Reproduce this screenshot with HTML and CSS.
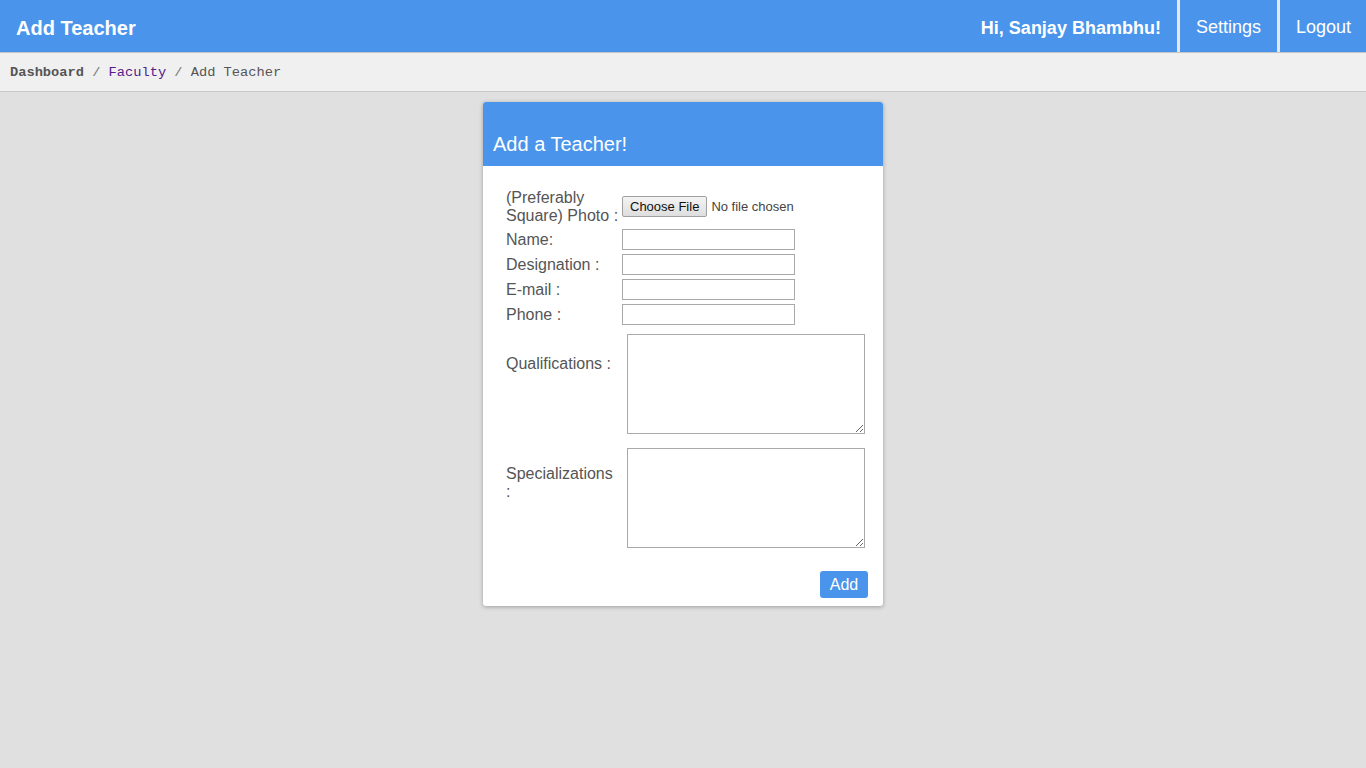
FILE: index.html
```html
<!DOCTYPE html>
<html>
<head>
<meta charset="utf-8">
<title>Add Teacher</title>
<link rel="stylesheet" href="styles.css">
</head>
<body>
<header class="topbar">
  <div class="brand">Add Teacher</div>
  <nav class="nav">
    <span class="greet">Hi, Sanjay Bhambhu!</span>
    <a class="nav-link" href="#">Settings</a>
    <a class="nav-link" href="#">Logout</a>
  </nav>
</header>
<div class="crumbs">
  <a class="crumb-home" href="#">Dashboard</a><span class="sep"> / </span><a class="crumb-link" href="#">Faculty</a><span class="sep"> / </span><span class="crumb-cur">Add Teacher</span>
</div>
<main class="main">
  <section class="card">
    <div class="card-head">Add a Teacher!</div>
    <form class="card-body">
      <div class="grid-a">
        <label class="lbl lbl-photo">(Preferably Square) Photo :</label>
        <div class="cell-center"><input class="file" type="file"></div>
        <label class="lbl">Name:</label>
        <input class="txt" type="text">
        <label class="lbl">Designation :</label>
        <input class="txt" type="text">
        <label class="lbl">E-mail :</label>
        <input class="txt" type="text">
        <label class="lbl">Phone :</label>
        <input class="txt" type="text">
      </div>
      <div class="grid-b">
        <label class="lbl lbl-q">Qualifications :</label>
        <textarea class="area"></textarea>
        <label class="lbl lbl-s">Specializations :</label>
        <textarea class="area"></textarea>
      </div>
      <div class="actions">
        <button class="btn" type="button">Add</button>
      </div>
    </form>
  </section>
</main>
</body>
</html>
```
FILE: styles.css
```css
* { box-sizing: border-box; }
html, body { margin: 0; padding: 0; }
body {
  background: #e0e0e0;
  font-family: "Liberation Sans", Arial, sans-serif;
  min-height: 768px;
}
.topbar {
  height: 53px;
  background: #4a95eb;
  border-bottom: 1px solid #c4c4c4;
  display: flex;
  align-items: stretch;
  justify-content: space-between;
  color: #fff;
}
.brand {
  font-size: 20px;
  font-weight: bold;
  padding-left: 16px;
  display: flex;
  align-items: center;
  padding-top: 5px;
}
.nav { display: flex; align-items: stretch; }
.greet {
  font-size: 18px;
  font-weight: bold;
  display: flex;
  align-items: center;
  padding: 4px 16px 0 18px;
}
.nav-link {
  color: #fff;
  text-decoration: none;
  font-size: 18px;
  display: flex;
  align-items: center;
  border-left: 3px solid #e6e6e6;
  padding: 2px 16px 0 16px;
}
.nav-link:last-child { padding-right: 15px; }
.crumbs {
  height: 39px;
  background: #f0f0f0;
  border-bottom: 1px solid #c8c8c8;
  font-family: "Liberation Mono", "DejaVu Sans Mono", monospace;
  font-size: 13.7px;
  padding: 12px 10px 0;
  color: #555;
}
.crumb-home { color: #555; font-weight: bold; text-decoration: none; }
.crumb-link { color: #551a8b; text-decoration: none; }
.sep { color: #777; }
.crumb-cur { color: #555; }
.main {
  display: flex;
  justify-content: center;
  padding-top: 10px;
}
.card {
  width: 400px;
  background: #fff;
  border-radius: 3px;
  box-shadow: 0 1px 4px rgba(0, 0, 0, 0.3);
}
.card-head {
  height: 64px;
  background: #4a95eb;
  border-radius: 3px 3px 0 0;
  color: #fff;
  font-size: 20px;
  padding: 31px 10px 0;
}
.card-body {
  padding: 23px 15px 8px 23px;
  margin: 0;
}
.lbl {
  font-size: 16px;
  line-height: 18px;
  color: #555;
}
.grid-a {
  display: grid;
  grid-template-columns: 116px 1fr;
  column-gap: 0;
  row-gap: 4px;
  align-items: center;
}
.cell-center { display: flex; align-items: center; }
.file {
  display: block;
  height: 21px;
  margin: -2px 0 0;
  font-family: "Liberation Sans", Arial, sans-serif;
  font-size: 13px;
  color: #444;
  width: 200px;
}
.file::file-selector-button {
  font-family: "Liberation Sans", Arial, sans-serif;
  font-size: 13px;
  color: #111;
  height: 21px;
  padding: 0 7px;
  margin-right: 4px;
  border: 1px solid #a0a0a0;
  border-radius: 2px;
  background: linear-gradient(#f4f4f4, #dedede);
}
.txt {
  width: 173px;
  height: 21px;
  border: 1px solid #a9a9a9;
  margin: 0;
  padding: 1px 2px;
  font-size: 13px;
  justify-self: start;
}
.grid-b {
  display: grid;
  grid-template-columns: 110px 238px;
  column-gap: 11px;
  row-gap: 14px;
  margin-top: 9px;
  margin-right: 3px;
  align-items: start;
}
.lbl-q { padding-top: 21px; }
.lbl-s { padding-top: 17px; }
.area {
  width: 238px;
  height: 100px;
  border: 1px solid #a9a9a9;
  margin: 0;
  padding: 2px;
  display: block;
}
.actions {
  display: flex;
  justify-content: flex-end;
  margin-top: 23px;
}
.btn {
  width: 48px;
  height: 27px;
  background: #4a95eb;
  color: #fff;
  border: none;
  border-radius: 3px;
  font-family: "Liberation Sans", Arial, sans-serif;
  font-size: 16px;
  padding: 0;
}
```
